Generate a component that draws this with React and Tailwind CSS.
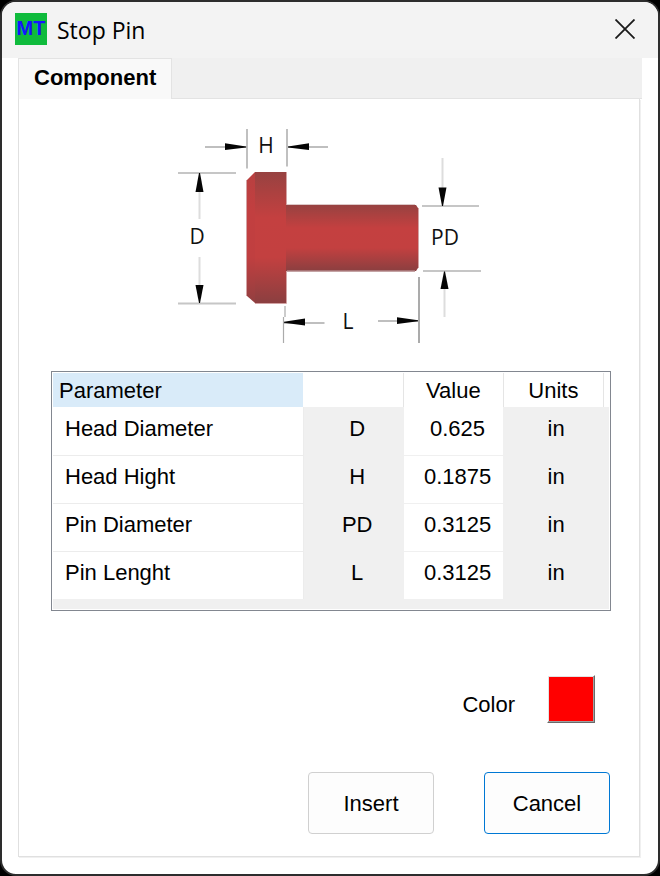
import { useState } from "react";

const parameters = [
  { name: "Head Diameter", symbol: "D", value: "0.625", units: "in" },
  { name: "Head Hight", symbol: "H", value: "0.1875", units: "in" },
  { name: "Pin Diameter", symbol: "PD", value: "0.3125", units: "in" },
  { name: "Pin Lenght", symbol: "L", value: "0.3125", units: "in" },
];

const TitleBar = () => (
  <header className="flex h-14 shrink-0 items-center gap-2.5 bg-[#f3f3f3] pr-5 pb-0.5 pl-[13px]">
    <svg viewBox="0 0 32 32" className="size-8" aria-hidden="true">
      <rect width="32" height="32" fill="#0fbb3c" />
      <text
        x="16"
        y="22"
        textAnchor="middle"
        className="font-['Liberation_Sans',sans-serif] text-[20px] font-bold"
        fill="#1414ff"
      >
        MT
      </text>
    </svg>
    <h1 className="flex-1 pt-0.5 font-['Open_Sans',sans-serif] text-[23px] leading-8">Stop Pin</h1>
    <button type="button" aria-label="Close" className="p-[3px]">
      <svg viewBox="0 0 20 20" className="size-5" stroke="#1a1a1a" strokeWidth="1.8">
        <path d="M0.5 0.5 19.5 19.5M19.5 0.5 0.5 19.5" />
      </svg>
    </button>
  </header>
);

const PinDiagram = () => (
  <svg viewBox="178 127 306 218" className="mx-auto h-[218px] w-[306px]" role="img" aria-label="Stop pin dimensions">
    <defs>
      <linearGradient id="head" x1="0" y1="0" x2="0" y2="1">
        <stop offset="0" stopColor="#974241" />
        <stop offset="0.15" stopColor="#ab4140" />
        <stop offset="0.35" stopColor="#c44040" />
        <stop offset="0.65" stopColor="#c34040" />
        <stop offset="1" stopColor="#8b3f40" />
      </linearGradient>
      <linearGradient id="bevel" x1="0" y1="0" x2="0" y2="1">
        <stop offset="0" stopColor="#b84040" />
        <stop offset="0.3" stopColor="#c23f40" />
        <stop offset="0.65" stopColor="#c03f40" />
        <stop offset="1" stopColor="#923f40" />
      </linearGradient>
    </defs>

    {/* head and shank */}
    <path d="M255 172H286V303H255Z" fill="url(#head)" />
    <path d="M255 172V303L247 296V180Z" fill="url(#bevel)" />
    <path d="M286 205H416L418 208V268L416 271H286Z" fill="url(#head)" />
    <g fill="none" stroke="#d3a3a4">
      <path d="M286.500 172V205M286.500 271V303.500H255M246.500 180V296" />
      <path d="M287 204.500H415" stroke="#ddc8c8" />
      <path d="M287 271H415" stroke="#b08586" strokeWidth="1.500" />
      <path d="M418.500 208V268" />
    </g>

    {/* extension and dimension lines */}
    <g fill="none" stroke="#ababab" strokeWidth="1.500">
      <path d="M247 129V168.500M287 129V166.500" />
      <path d="M205 147H247M288 147H328" />
      <path d="M285 306V317M283.500 317V343" strokeWidth="1.200" />
      <path d="M284 323H324.500M378 321H418" />
      <path d="M419 277V343" strokeWidth="2" />
    </g>
    <g fill="none" stroke="#c6c6c6" strokeWidth="2">
      <path d="M178 173H236M178 303.500H236" />
      <path d="M422 206H479M423 271H481" />
    </g>
    <g fill="none" stroke="#dddddd" strokeWidth="2">
      <path d="M199.500 190V219M199.500 257V286" />
      <path d="M442.500 158V188M444.500 288V317" />
    </g>

    <g fill="#050505">
      <path d="M225 143.300 246 146.500V147.500L225 150Z" />
      <path d="M309 143.300 288 146.500V147.500L309 150Z" />
      <path d="M195.500 192 199 173H200L203.500 192Z" />
      <path d="M195.500 285 199 303H200L203.500 285Z" />
      <path d="M438.500 187.500 442 206H443L446.500 187.500Z" />
      <path d="M440.500 289 444 271.500H445L448.500 289Z" />
      <path d="M305 318.500 284 321.800V322.800L305 325.500Z" />
      <path d="M397 317.300 418 320.300V321.300L397 324Z" />
    </g>

    <g className="font-['Open_Sans',sans-serif] text-[21px]" fill="#111111" textAnchor="middle">
      <text x="266" y="153">H</text>
      <text x="197" y="244">D</text>
      <text x="445" y="245">PD</text>
      <text x="348" y="329">L</text>
    </g>
  </svg>
);

const ParameterTable = ({ values, onChange }) => (
  <div className="mt-[26px] border border-[#828790] bg-white p-px">
    <div className="bg-[#f0f0f0] pb-2.5">
      <table className="w-full table-fixed border-collapse">
        <colgroup>
          <col className="w-[45%]" />
          <col className="w-[18%]" />
          <col className="w-[18%]" />
          <col className="w-[18%]" />
          <col />
        </colgroup>
        <thead>
          <tr className="h-[34px] bg-white">
            <th className="bg-[#d9ebf9] pt-0.5 pl-1.5 text-left font-normal">Parameter</th>
            <th aria-label="Symbol" className="border-r border-[#e5e5e5]" />
            <th className="border-r border-[#e5e5e5] pt-0.5 font-normal">Value</th>
            <th className="border-r border-[#e5e5e5] pt-0.5 font-normal">Units</th>
            <td />
          </tr>
        </thead>
        <tbody>
          {parameters.map((row, index) => (
            <tr key={row.name} className="group h-12">
              <td className="border-r border-b border-[#ececec] bg-white pb-1 pl-3 group-last:border-b-0">{row.name}</td>
              <td className="pb-1 pl-2 text-center">{row.symbol}</td>
              <td className="border-b border-l border-[#f0f0f0] bg-white pb-1 pl-2 group-last:border-b-0">
                <input
                  type="text"
                  aria-label={row.name}
                  value={values[index]}
                  onChange={(event) => onChange(index, event.target.value)}
                  className="block w-full bg-transparent text-center outline-none"
                />
              </td>
              <td colSpan="2" className="pb-1 text-center">
                {row.units}
              </td>
            </tr>
          ))}
        </tbody>
      </table>
    </div>
  </div>
);

const App = () => {
  const [values, setValues] = useState(parameters.map((row) => row.value));

  const handleChange = (index, value) => {
    setValues((current) => current.map((item, i) => (i === index ? value : item)));
  };

  return (
    <div className="flex min-h-screen bg-black font-['Liberation_Sans',Arial,sans-serif] text-[22px] leading-7 text-black">
      <main className="flex flex-1 flex-col overflow-hidden rounded-2xl border-2 border-[#2d2d2d] bg-white">
        <TitleBar />
        <div className="mx-4 mb-[17px] flex flex-1 flex-col">
          <div role="tablist" className="flex bg-[#f0f0f0]">
            <button
              type="button"
              role="tab"
              aria-selected="true"
              className="h-[41px] border border-b-0 border-[#e3e3e3] bg-[#f9f9f9] px-[15px] pb-0.5 font-bold"
            >
              Component
            </button>
            <div className="flex-1 border-b border-[#e3e3e3]" />
          </div>
          <section
            role="tabpanel"
            className="mr-0.5 flex-1 border border-t-0 border-[#e0e0e0] pt-7 pr-7 pb-[21px] pl-8 shadow-[1px_1px_0_#f0f0f0]"
          >
            <PinDiagram />
            <ParameterTable values={values} onChange={handleChange} />

            <div className="mt-16 mr-4 flex items-center justify-end gap-8">
              <label htmlFor="color" className="pt-3">
                Color
              </label>
              <button
                id="color"
                type="button"
                className="size-12 border border-t-white border-r-[#696969] border-b-[#696969] border-l-white bg-[#ff0000] shadow-[inset_-1px_-1px_0_#a0a0a0,inset_1px_1px_0_#e3e3e3]"
              />
            </div>

            <div className="mt-[49px] mr-px flex justify-end gap-[50px]">
              <button type="button" className="h-[62px] w-[126px] rounded-[4px] border border-[#d0d0d0] bg-[#fdfdfd] pt-0.5">
                Insert
              </button>
              <button type="button" className="h-[62px] w-[126px] rounded-[4px] border border-[#0078d4] bg-[#fdfdfd] pt-0.5">
                Cancel
              </button>
            </div>
          </section>
        </div>
      </main>
    </div>
  );
};

export default App;
